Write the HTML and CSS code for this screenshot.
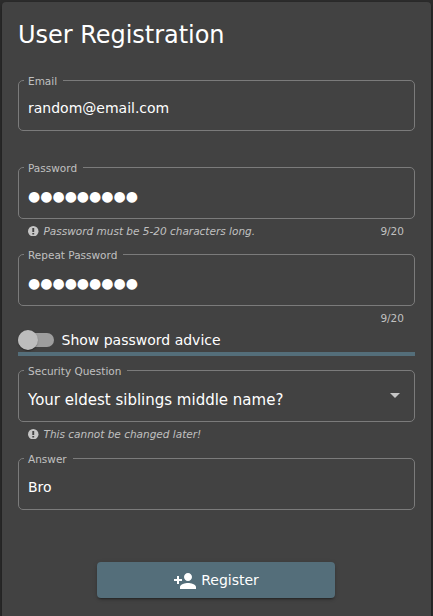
FILE: index.html
```
<!DOCTYPE html>
<html lang="en">
<head>
<meta charset="utf-8">
<title>User Registration</title>
<link rel="stylesheet" href="styles.css">
</head>
<body>
<main class="card">
  <h1 class="title">User Registration</h1>
  <form class="form">
    <fieldset class="field field-email"><legend>Email</legend><span class="value">random@email.com</span></fieldset>

    <fieldset class="field"><legend>Password</legend><span class="value">●●●●●●●●●</span></fieldset>
    <div class="hint">
      <svg class="info" viewBox="0 0 10 10"><circle cx="5" cy="5" r="5"/><path d="M4.1 2h1.8v3.7H4.1zM4.1 6.6h1.8v1.6H4.1z"/></svg>
      <em>Password must be 5-20 characters long.</em><span class="count">9/20</span>
    </div>

    <fieldset class="field"><legend>Repeat Password</legend><span class="value">●●●●●●●●●</span></fieldset>
    <div class="hint hint-short"><span class="count">9/20</span></div>

    <div class="toggle"><span class="track"><span class="thumb"></span></span><span>Show password advice</span></div>
    <div class="strength"></div>

    <fieldset class="field field-select"><legend>Security Question</legend><span class="value">Your eldest siblings middle name?</span><svg class="arrow" viewBox="0 0 10 5"><path d="M0 0h10L5 5z"/></svg></fieldset>
    <div class="hint hint-select">
      <svg class="info" viewBox="0 0 10 10"><circle cx="5" cy="5" r="5"/><path d="M4.1 2h1.8v3.7H4.1zM4.1 6.6h1.8v1.6H4.1z"/></svg>
      <em>This cannot be changed later!</em>
    </div>

    <fieldset class="field"><legend>Answer</legend><span class="value">Bro</span></fieldset>

    <button class="register" type="button">
      <svg class="person" viewBox="0 0 24 24"><path d="M15 12c2.21 0 4-1.79 4-4s-1.79-4-4-4-4 1.79-4 4 1.79 4 4 4zm-9-2V7H4v3H1v2h3v3h2v-3h3v-2H6zm9 4c-2.67 0-8 1.34-8 4v2h16v-2c0-2.66-5.33-4-8-4z"/></svg>
      <span>Register</span>
    </button>
  </form>
</main>
</body>
</html>
```
FILE: styles.css
```
* { box-sizing: border-box; }
html { background: #2c2c2c; }
body {
  margin: 0;
  height: 616px;
  padding: 2px 2px 0;
  overflow: hidden;
  font: 14px/20px "DejaVu Sans", sans-serif;
  color: #fff;
}
.card {
  height: 630px;
  padding: 17px 16px 16px;
  border-radius: 4px;
  background: #424242;
  box-shadow: 0 2px 4px rgba(0, 0, 0, .4);
}
.title {
  margin: 0 0 29px;
  font-size: 24px;
  line-height: 32px;
  font-weight: 400;
  letter-spacing: -0.03px;
}
.form { display: flex; flex-direction: column; }
.field {
  width: 397px;
  height: 52px;
  margin: 0;
  padding: 0 14px 0 5px;
  border: 1px solid #7b7b7b;
  border-radius: 5px;
  min-width: 0;
}
.field-email { height: 51px; margin-bottom: 36px; }
.field legend {
  height: 1px;
  padding: 0 6px 0 4px;
  font-size: 10.5px;
  line-height: 2px;
  color: #c0c0c0;
}
.value {
  display: inline-block;
  padding-left: 4px;
  margin-top: 18px;
}
.field-email .value { margin-top: 17px; }
.field-select .value { margin-top: 19px; font-size: 15px; }
.hint {
  display: flex;
  align-items: center;
  height: 24px;
  margin-bottom: 11px;
  padding: 0 11px 0 10px;
  font-size: 10.5px;
  color: #c0c0c0;
}
.hint-short { margin-bottom: 0; }
.hint-select { margin-bottom: 12px; }
.info { width: 10.5px; height: 10.5px; margin-right: 5px; fill: #c6c6c6; }
.info path { fill: #424242; }
.count { margin-left: auto; }
.toggle { display: flex; align-items: center; height: 20px; gap: 7.5px; }
.hint-short + .toggle { margin: 0 0 2px; }
.track {
  width: 36px;
  height: 14px;
  border-radius: 7px;
  background: #9e9e9e;
}
.thumb {
  display: block;
  width: 20px;
  height: 20px;
  margin-top: -3px;
  border-radius: 50%;
  background: #bdbdbd;
  box-shadow: 0 2px 1px -1px rgba(0,0,0,.2), 0 1px 1px rgba(0,0,0,.14), 0 1px 3px rgba(0,0,0,.12);
}
.strength { height: 4px; background: #546e7a; margin-bottom: 14px; }
.field-select .arrow {
  float: right;
  width: 10px;
  height: 5px;
  margin-top: 22px;
  fill: #c6c6c6;
}
.register {
  display: flex;
  align-items: center;
  justify-content: center;
  align-self: center;
  width: 238px;
  height: 36px;
  margin: 52px 1px 0 0;
  padding: 0;
  border: 0;
  border-radius: 4px;
  background: #546e7a;
  color: #fff;
  font: inherit;
  gap: 4px;
  box-shadow: 0 3px 1px -2px rgba(0,0,0,.2), 0 2px 2px rgba(0,0,0,.14), 0 1px 5px rgba(0,0,0,.12);
}
.person { width: 24px; height: 24px; margin-top: 2px; fill: #fff; }
```
